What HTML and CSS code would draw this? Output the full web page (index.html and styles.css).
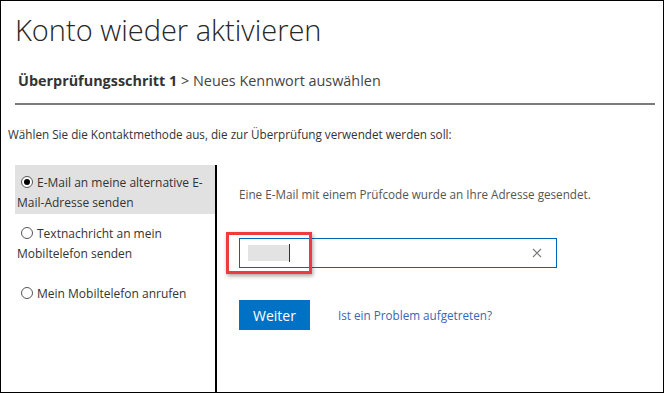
FILE: index.html
```html
<!DOCTYPE html>
<html lang="de">
<head>
<meta charset="utf-8">
<link rel="stylesheet" href="styles.css">
</head>
<body>
<div class="page">
  <h1 class="title">Konto wieder aktivieren</h1>
  <div class="steps"><b>Überprüfungsschritt 1</b> &gt; Neues Kennwort auswählen</div>
  <p class="intro">Wählen Sie die Kontaktmethode aus, die zur Überprüfung verwendet werden soll:</p>
  <div class="columns">
    <div class="methods">
      <div class="method selected"><span class="radio checked"></span>E-Mail an meine alternative E-Mail-Adresse senden</div>
      <div class="method"><span class="radio"></span>Textnachricht an mein Mobiltelefon senden</div>
      <div class="method"><span class="radio"></span>Mein Mobiltelefon anrufen</div>
    </div>
    <div class="detail">
      <p class="info">Eine E-Mail mit einem Prüfcode wurde an Ihre Adresse gesendet.</p>
      <div class="field">
        <span class="blur"></span><span class="caret"></span>
        <svg class="clear" width="10" height="10" viewBox="0 0 10 10"><path d="M1 1L9 9M9 1L1 9" stroke="#777" stroke-width="1.1" fill="none"/></svg>
        <span class="highlight"></span>
      </div>
      <div class="actions">
        <button class="btn">Weiter</button>
        <a class="link" href="#">Ist ein Problem aufgetreten?</a>
      </div>
    </div>
  </div>
</div>
</body>
</html>
```
FILE: styles.css
```css
* { box-sizing: border-box; }
html, body { margin: 0; padding: 0; background: #fff; }
body { font-family: "Open Sans", "Noto Sans", sans-serif; color: #333; }
.page {
  width: 664px; height: 393px;
  border: 1px solid #000;
  display: flex; flex-direction: column;
  overflow: hidden;
}
.title {
  margin: 10px 0 0 14px;
  font-weight: 300; font-size: 29px; line-height: 38px;
  color: #262626; letter-spacing: 0;
}
.steps {
  margin: 22px 8px 0 14px;
  padding: 0 0 12px 3px;
  font-size: 14.4px; line-height: 20px;
  border-bottom: 2px solid #7a7a7a;
  color: #444;
}
.steps b { font-weight: 700; color: #333; }
.intro {
  margin: 20px 0 0 7px;
  font-size: 11.7px; line-height: 18px; color: #333;
}
.columns { flex: 1; display: flex; margin-top: 22px; }
.methods {
  width: 202px; margin-left: 14px;
  border-right: 2px solid #000;
  font-size: 12px; line-height: 20px; color: #333;
}
.method { padding: 7px 4px 6px 2px; }
.method.selected { background: #e1e1e1; padding: 8px 4px 1px 2px; }
.method + .method { margin-top: 3px; }
.method:last-child { margin-top: 7px; }
.radio {
  display: inline-block; width: 12px; height: 12px;
  border: 1px solid #555; border-radius: 50%;
  margin: 0 4px 0 4px; vertical-align: -1px;
  position: relative; background: #fff;
}
.radio.checked::after {
  content: ""; position: absolute; left: 2px; top: 2px;
  width: 6px; height: 6px; border-radius: 50%; background: #000;
}
.detail { flex: 1; padding: 20px 0 0 22px; }
.info { margin: 0; font-size: 11.7px; line-height: 18px; color: #555; }
.field {
  position: relative;
  margin-top: 35px; width: 318px; height: 30px;
  border: 1px solid #0067b8;
  display: flex; align-items: center; padding-left: 8px;
}
.blur { width: 41px; height: 16px; background: #e3e3e3; }
.caret { width: 1px; height: 18px; background: #333; }
.clear { position: absolute; right: 14px; top: 9px; }
.highlight {
  position: absolute; left: -14px; top: -7px;
  width: 86px; height: 42px;
  border: 3px solid #ee3c3c;
  box-shadow: 1px 2px 4px rgba(0,0,0,0.35);
}
.actions { display: flex; align-items: center; margin-top: 32px; }
.btn {
  width: 71px; height: 30px; border: 0; padding: 0;
  background: #0072c6; color: #fff;
  font-family: inherit; font-size: 14px;
}
.link { margin-left: 28px; font-size: 11.7px; color: #3a66b8; text-decoration: none; }
```
